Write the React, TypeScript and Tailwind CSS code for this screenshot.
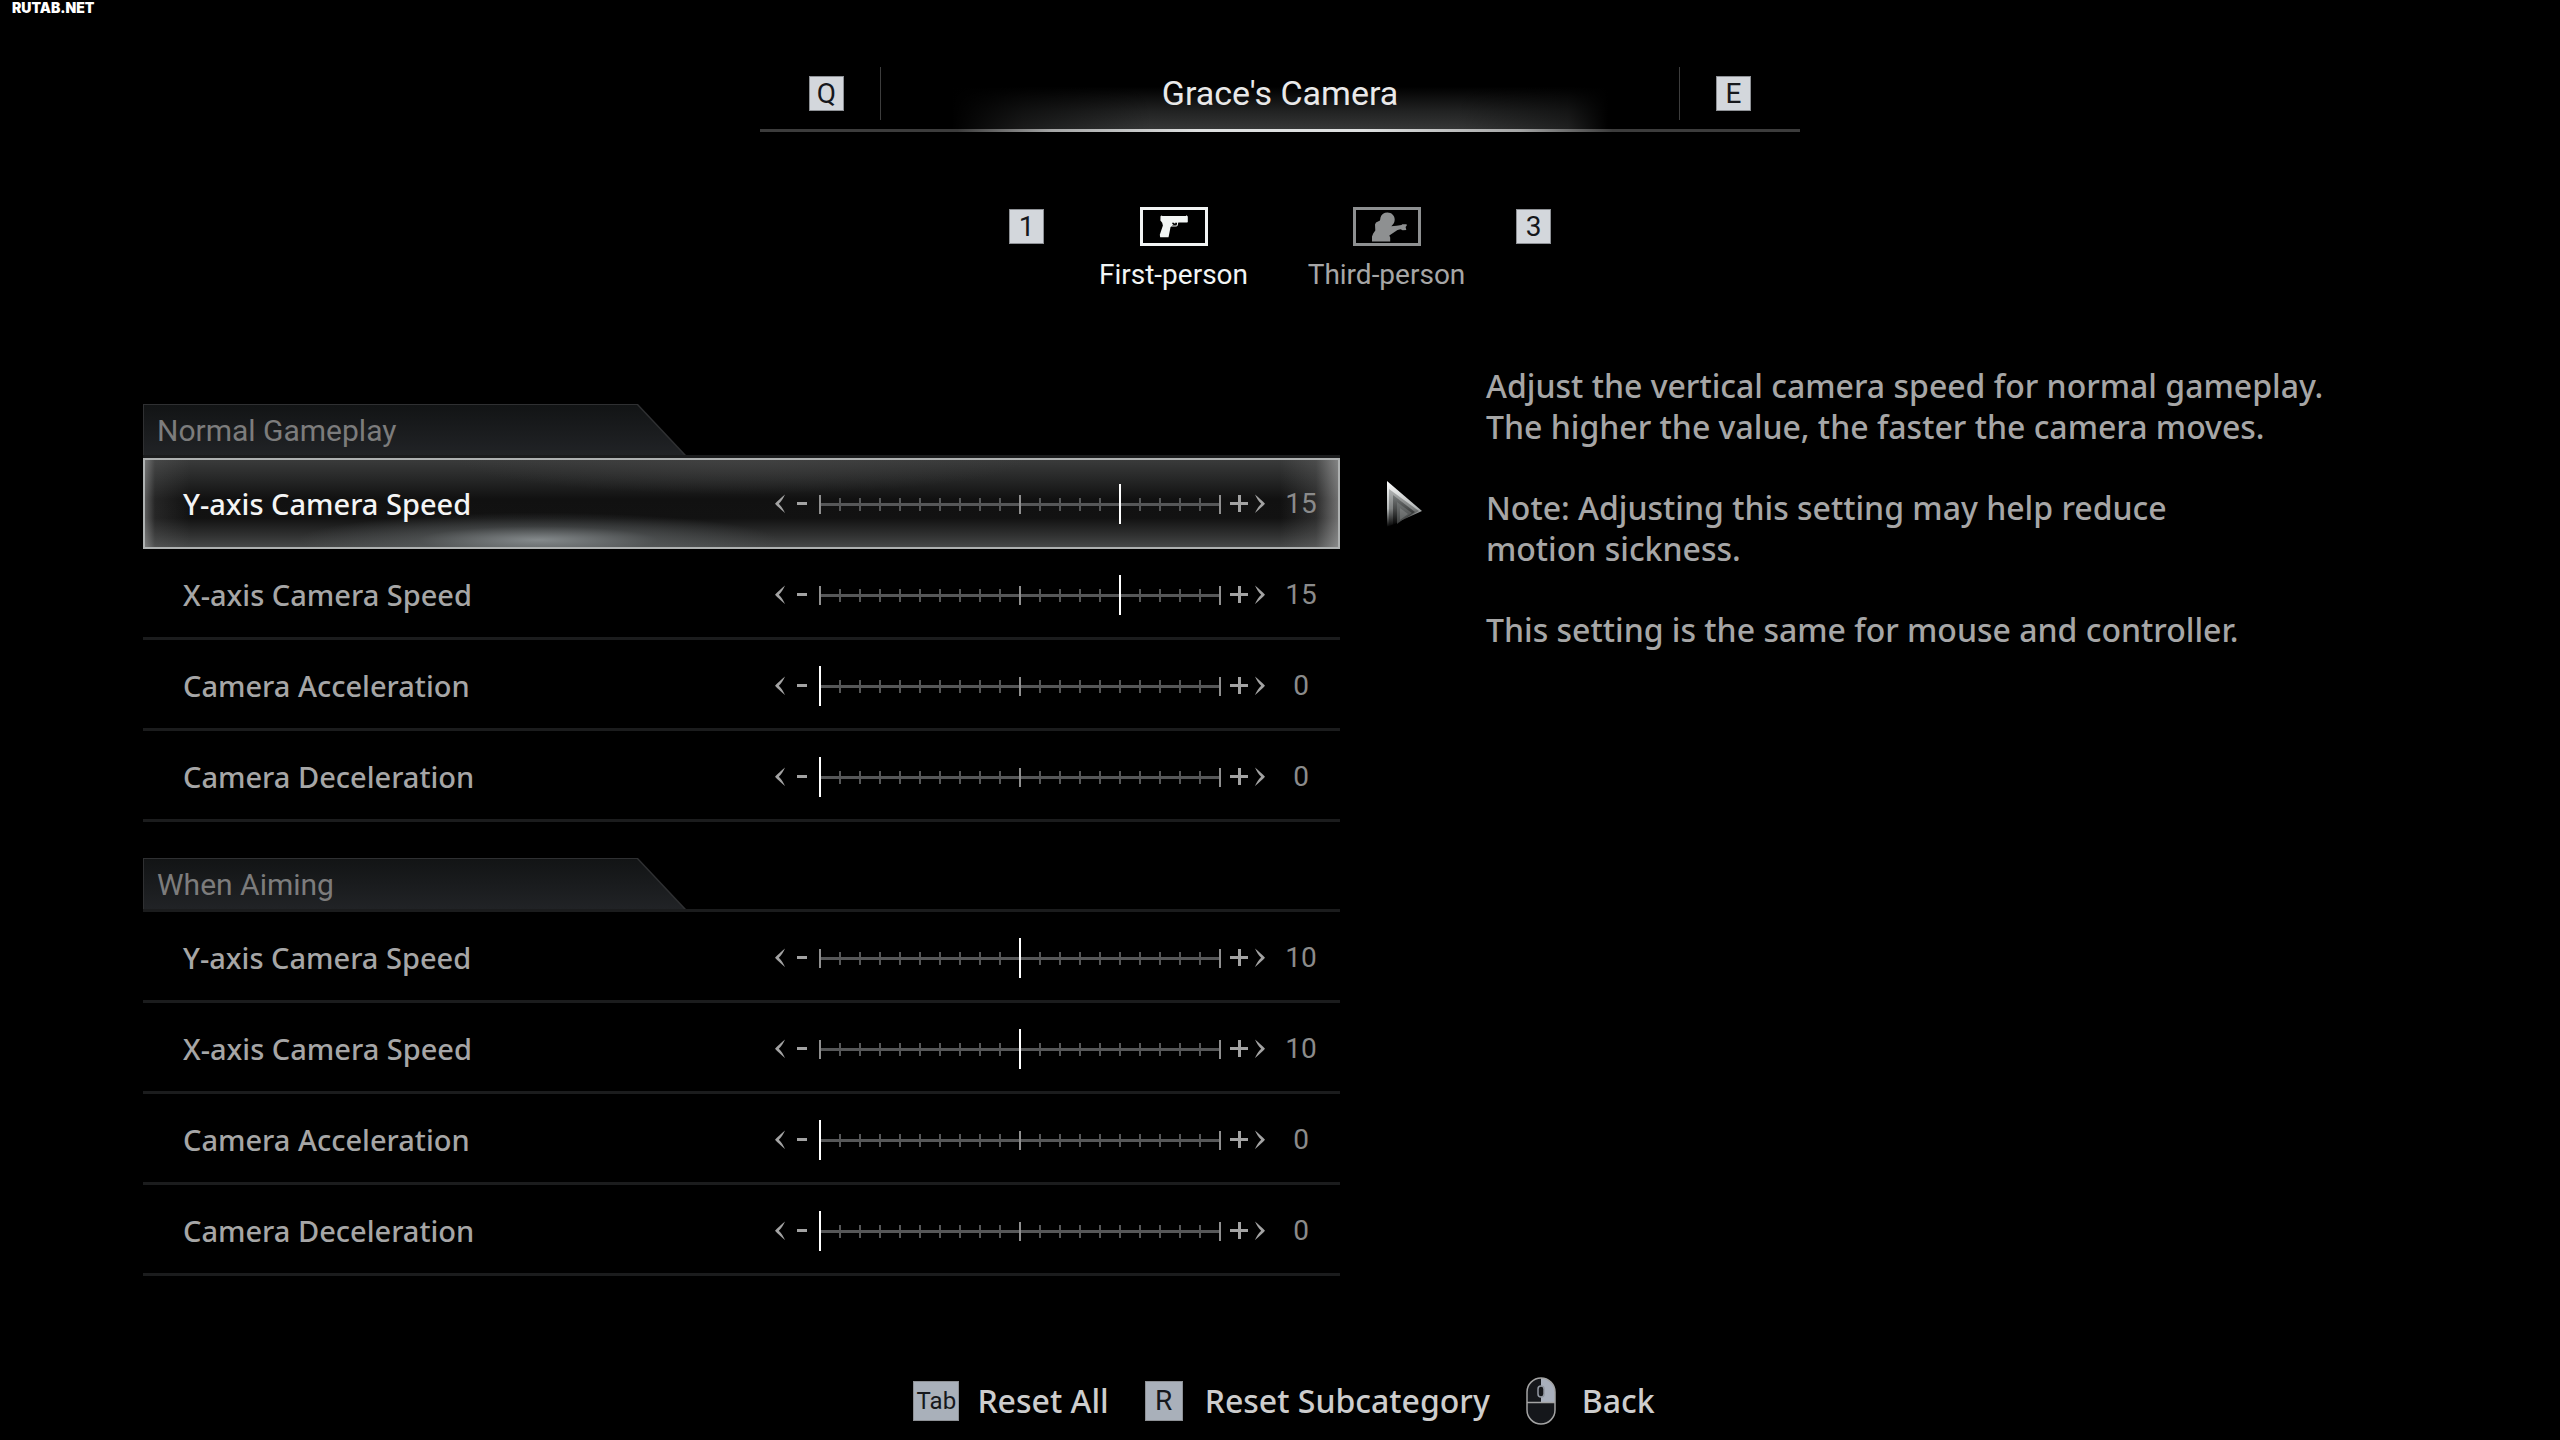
import { useId, useState } from 'react'
import type { ReactNode } from 'react'
import clsx from 'clsx'

type Setting = { key: string; label: string; value: number }

const sections: { title: string; settings: Setting[] }[] = [
  {
    title: 'Normal Gameplay',
    settings: [
      { key: 'normal-y', label: 'Y-axis Camera Speed', value: 15 },
      { key: 'normal-x', label: 'X-axis Camera Speed', value: 15 },
      { key: 'normal-accel', label: 'Camera Acceleration', value: 0 },
      { key: 'normal-decel', label: 'Camera Deceleration', value: 0 },
    ],
  },
  {
    title: 'When Aiming',
    settings: [
      { key: 'aim-y', label: 'Y-axis Camera Speed', value: 10 },
      { key: 'aim-x', label: 'X-axis Camera Speed', value: 10 },
      { key: 'aim-accel', label: 'Camera Acceleration', value: 0 },
      { key: 'aim-decel', label: 'Camera Deceleration', value: 0 },
    ],
  },
]

const MAX = 20
const ticks = Array.from({ length: MAX + 1 }, (_, i) => i)

function KeyCap({ children, className }: { children: ReactNode; className?: string }) {
  return (
    <kbd
      className={clsx(
        "flex items-center justify-center border border-[#8d9095] font-['Roboto',sans-serif] text-[#16181c]",
        className,
      )}
    >
      {children}
    </kbd>
  )
}

function PistolIcon() {
  return (
    <svg viewBox="0 0 30 23" className="h-[23px] w-[30px]" fill="currentColor" aria-hidden="true">
      <path
        fillRule="evenodd"
        d="M1.5 1.2 2.6.6l.8.5h23.4l1-.8.6.9.4.1v5.6l-.6.5H19.3l-.6 2.9c-.2.8-.6 1.1-1.4 1.1h-4.6c-.7 0-1 .2-1.2.9L9.9 20.5l-.4 1.7H1.2L.8 19.8 3.9 10.5 3.2 7.7 1.4 5.6ZM13.1 7.7l.3 1.3 1.3.7-1.4.2-.2.7h3.9c.4 0 .6-.2.7-.6l.5-2.3h-2.1l.1 1.5-1.2-1.5Z"
      />
    </svg>
  )
}

function ShooterIcon() {
  return (
    <svg viewBox="0 0 37 30" className="h-[30px] w-[37px]" fill="currentColor" aria-hidden="true">
      <path d="M1 29.5V24.5L2.2 21.5 4.3 18.6 4 12.5 5 10.5 9 8.5 9.5 5.5C10.5 2.5 13 .6 16.5.6 20.5.6 23.5 3.5 23.7 7.2 23.8 10 22.5 12 21 13.4L20.3 14.3 25.5 13.8 30.5 12.9 31.3 12.2 35.6 12.2 35.8 13.4 34.6 15.1 35.3 17.9 31.6 18.3 29.6 17.2 26.5 17.9 18.3 23.5 19.2 25.5V29.5Z" />
    </svg>
  )
}

function MouseIcon() {
  return (
    <svg viewBox="0 0 30 48" className="h-12 w-[30px]" aria-hidden="true">
      <rect x="1" y="1" width="28" height="46" rx="14" fill="#15171b" />
      <path d="M15 1A14 14 0 0 1 29 15V25.5H15Z" fill="#a9b0bd" />
      <path d="M1 25.5H29" stroke="#a4a4a4" strokeWidth="1.5" />
      <rect x="1" y="1" width="28" height="46" rx="14" fill="none" stroke="#a4a4a4" strokeWidth="1.5" />
      <rect x="12" y="9" width="6" height="11" rx="3" fill="#15171b" stroke="#9298a2" strokeWidth="1.5" />
    </svg>
  )
}

function Pointer() {
  return (
    <svg viewBox="0 0 36 48" className="absolute top-1/2 left-full ml-[46px] h-12 w-9 -translate-y-1/2" aria-hidden="true">
      <defs>
        <linearGradient id="pointer-fade" x1="0" y1="0" x2="0" y2="1">
          <stop offset="0" stopColor="#fff" />
          <stop offset="0.6" stopColor="#b4b8b8" />
          <stop offset="1" stopColor="#000" />
        </linearGradient>
        <linearGradient id="pointer-inner" x1="0" y1="0" x2="0" y2="1">
          <stop offset="0" stopColor="#6e7272" />
          <stop offset="1" stopColor="#000" />
        </linearGradient>
      </defs>
      <path d="M1 1 36 31 1 47Z" fill="url(#pointer-fade)" />
      <path d="M3 9 33 31 3 47Z" fill="url(#pointer-inner)" opacity="0.45" />
      <path d="M7 15 29 32 7 45Z" fill="url(#pointer-inner)" opacity="0.8" />
      <path d="M11 22 26 33 11 44Z" fill="#8a8e8e" opacity="0.4" />
      <path d="M14 28 22 34 14 40Z" fill="#a5a8a8" opacity="0.3" />
    </svg>
  )
}

function SettingRow({ setting, selected }: { setting: Setting; selected?: boolean }) {
  const id = useId()
  const [value, setValue] = useState(setting.value)
  const step = (delta: number) => setValue((v) => Math.min(MAX, Math.max(0, v + delta)))

  return (
    <div
      className={clsx(
        'relative flex h-[91px] items-center pr-1 pl-10',
        selected
          ? 'bg-[radial-gradient(ellipse_20%_30%_at_33%_90%,rgba(165,172,175,0.7),rgba(110,116,118,0.35)_50%,transparent),linear-gradient(to_right,rgba(190,190,190,0.5),rgba(120,120,120,0.2)_1%,transparent_4%,transparent_95%,rgba(140,140,140,0.22)_98%,rgba(200,200,200,0.55)),radial-gradient(ellipse_24%_40%_at_50%_0%,rgba(70,70,70,0.6),transparent),linear-gradient(to_bottom,#3c3d3d,#272828_22%,#111_45%,#121212_66%,#303131_85%,#4a4c4c)] outline-2 -outline-offset-2 outline-[#aeb1b1]'
          : 'border-b-[3px] border-[#1b1c1d] pt-[3px]',
      )}
    >
      <label
        htmlFor={id}
        className={clsx('flex-1 text-[29px] leading-10 font-medium', selected ? 'text-[#f4f4f4]' : 'text-[#a6a6a6]')}
      >
        {setting.label}
      </label>

      <button type="button" aria-label={`Decrease ${setting.label}`} className="mr-3 text-[#a3a3a3]" onClick={() => step(-1)}>
        <svg viewBox="0 0 32 20" className="h-5 w-8" fill="currentColor" aria-hidden="true">
          <path d="M10 .5C8.5 4 6.5 7 3.8 9.8 6.5 12.5 8.5 15.5 10 19 6.5 16 2.5 12.5 0 9.8 2.5 7 6.5 3.5 10 .5Z" />
          <rect x="22" y="8" width="10" height="3" />
        </svg>
      </button>

      <div className="grid h-10 w-[402px]">
        <svg viewBox="0 0 402 40" className="col-start-1 row-start-1 h-10 w-[402px]" aria-hidden="true">
          <rect x="0" y="19" width="402" height="3" fill="#565758" />
          {ticks.map((n) =>
            n % 10 === 0 ? (
              <rect key={n} x={n * 20} y="11" width="2" height="19" fill="#8f8f8f" />
            ) : (
              <rect key={n} x={n * 20} y="14" width="2" height="13" fill="#565758" />
            ),
          )}
        </svg>
        <input
          id={id}
          type="range"
          min={0}
          max={MAX}
          value={value}
          onChange={(e) => setValue(Number(e.target.value))}
          className="col-start-1 row-start-1 h-10 w-full appearance-none bg-transparent [&::-webkit-slider-thumb]:h-10 [&::-webkit-slider-thumb]:w-[2px] [&::-webkit-slider-thumb]:appearance-none [&::-webkit-slider-thumb]:bg-white"
        />
      </div>

      <button type="button" aria-label={`Increase ${setting.label}`} className="ml-[9px] text-[#a3a3a3]" onClick={() => step(1)}>
        <svg viewBox="0 0 36 20" className="h-5 w-9" fill="currentColor" aria-hidden="true">
          <rect x="0" y="8" width="18" height="3" />
          <rect x="8" y="1" width="3" height="17" />
          <path d="M25 .5C26.5 4 28.5 7 31.2 9.8 28.5 12.5 26.5 15.5 25 19 28.5 16 32.5 12.5 35 9.8 32.5 7 28.5 3.5 25 .5Z" />
        </svg>
      </button>

      <output htmlFor={id} className="w-[70px] text-center font-['Roboto',sans-serif] text-[28px] leading-10 text-[#8b8b8b]">
        {value}
      </output>

      {selected && <Pointer />}
    </div>
  )
}

function SectionHeader({ title }: { title: string }) {
  return (
    <div className="border-b-[3px] border-[#1b1c1d]">
      <div className="w-[543px] bg-[#2f3032] p-px pb-0 [clip-path:polygon(0_0,495px_0,100%_100%,0_100%)]">
        <h2 className="bg-linear-to-b from-[#121415] to-[#212326] pt-[2px] pl-[13px] font-['Roboto',sans-serif] text-[30px] leading-[48px] text-[#7c7c7c] [clip-path:polygon(0_0,493px_0,540px_100%,0_100%)]">
          {title}
        </h2>
      </div>
    </div>
  )
}

export default function App() {
  return (
    <div className="flex min-h-screen flex-col bg-black font-['Noto_Sans',sans-serif]">
      <span className="absolute top-0 left-3 font-['Inter',sans-serif] text-[14px] leading-4 font-black text-white">
        RUTAB.NET
      </span>

      {/* Category switcher */}
      <header className="mx-auto mt-[67px] w-[1040px]">
        <div className="flex items-start justify-between">
          <KeyCap className="mt-[9px] mr-9 ml-[49px] size-[35px] bg-[#d3d7dc] text-[28px]">Q</KeyCap>
          <div className="flex h-[62px] flex-1 justify-center bg-[linear-gradient(to_right,#000_9%,rgba(0,0,0,0.5)_18%,transparent_34%,transparent_72%,rgba(0,0,0,0.4)_86%,#000_91%),linear-gradient(to_top,#353636,#222323_28%,transparent_68%)]">
            <div className="h-[53px] w-px bg-[#3d3d3d]" />
            <h1 className="flex-1 text-center font-['Roboto',sans-serif] text-[34px] leading-[53px] text-[#e9e9e9]">
              Grace's Camera
            </h1>
            <div className="h-[53px] w-px bg-[#3d3d3d]" />
          </div>
          <KeyCap className="mt-[9px] mr-[49px] ml-9 size-[35px] bg-[#d3d7dc] text-[28px]">E</KeyCap>
        </div>
        <div className="h-[3px] bg-[linear-gradient(to_right,#3c3c3c_19%,#a4a5a5_28%,#dddfdf_42%,#dddfdf_58%,#a4a5a5_73%,#3c3c3c_82%)]" />
      </header>

      {/* Perspective tabs */}
      <nav className="mt-[75px] flex justify-center gap-[23px]">
        <KeyCap className="mt-[2px] size-[35px] bg-[#d3d7dc] text-[28px]">1</KeyCap>
        <div className="flex font-['Roboto',sans-serif] text-[28px]">
          <button type="button" className="flex w-[213px] flex-col items-center text-[#f2f5f4]">
            <span className="flex h-[39px] w-[68px] items-center justify-center border-[3px] border-current">
              <PistolIcon />
            </span>
            <span className="mt-[11px] leading-9">First-person</span>
          </button>
          <button type="button" className="flex w-[213px] flex-col items-center text-[#8e9091]">
            <span className="flex h-[39px] w-[68px] items-center justify-center border-[3px] border-current pl-[6px]">
              <ShooterIcon />
            </span>
            <span className="mt-[11px] leading-9 text-[#a6a6a6]">Third-person</span>
          </button>
        </div>
        <KeyCap className="mt-[2px] size-[35px] bg-[#d3d7dc] text-[28px]">3</KeyCap>
      </nav>

      <main className="mt-[72px] grid grid-cols-[1197fr_1074fr] gap-[146px] pl-[143px]">
        <div className="mt-[39px] flex flex-col gap-9">
          {sections.map((section, i) => (
            <section key={section.title}>
              <SectionHeader title={section.title} />
              {section.settings.map((setting, j) => (
                <SettingRow key={setting.key} setting={setting} selected={i === 0 && j === 0} />
              ))}
            </section>
          ))}
        </div>

        <aside className="flex max-w-[860px] flex-col gap-10 text-[32px] leading-[41px] font-medium text-[#a6a6a6]">
          <p>
            Adjust the vertical camera speed for normal gameplay.
            <br />
            The higher the value, the faster the camera moves.
          </p>
          <p>
            Note: Adjusting this setting may help reduce
            <br />
            motion sickness.
          </p>
          <p>This setting is the same for mouse and controller.</p>
        </aside>
      </main>

      <footer className="mt-auto flex items-center justify-center gap-9 pb-[15px] pl-2 text-[32px] leading-[48px] font-medium text-[#cdcdcd]">
        <button type="button" className="flex items-center gap-[18px]">
          <KeyCap className="h-10 w-[46px] bg-[#a9b0ba] text-[24px] font-normal">Tab</KeyCap>
          Reset All
        </button>
        <button type="button" className="flex items-center gap-[22px]">
          <KeyCap className="h-10 w-[38px] bg-[#a9b0ba] text-[28px] font-normal">R</KeyCap>
          Reset Subcategory
        </button>
        <button type="button" className="flex items-center gap-[26px]">
          <MouseIcon />
          Back
        </button>
      </footer>
    </div>
  )
}
